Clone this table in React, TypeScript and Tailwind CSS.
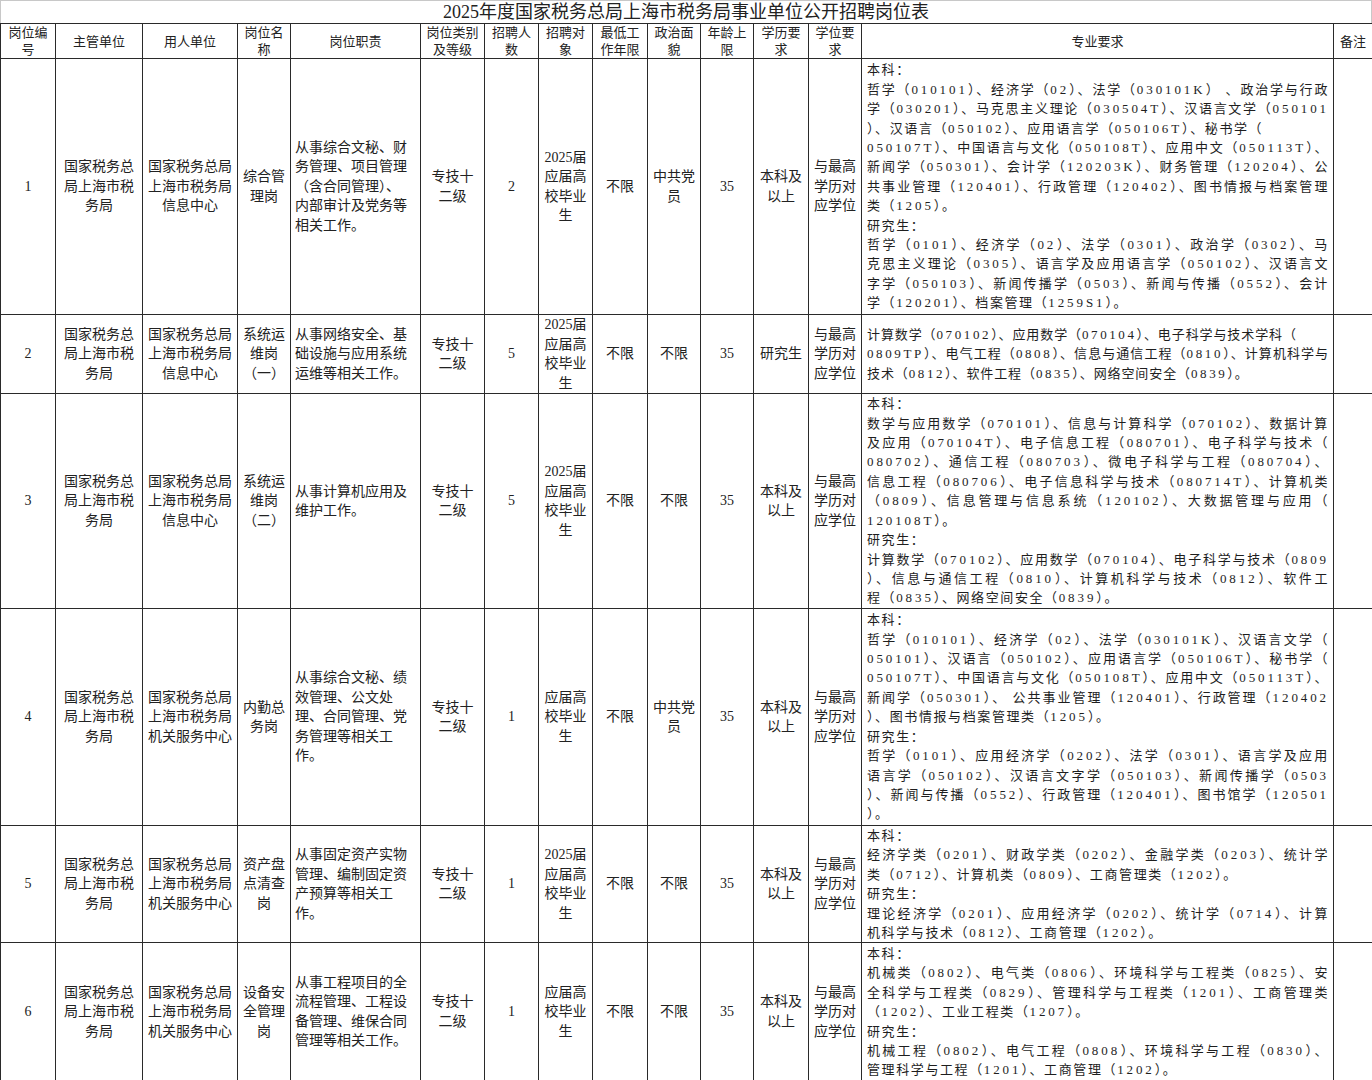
import React from "react";

type Row = {
  no: string;
  org: string[];
  unit: string[];
  post: string[];
  duty: string[];
  level: string[];
  count: string;
  target: string[];
  work: string;
  party: string[];
  age: string;
  edu: string[];
  degree: string[];
  major: string[][];
  loose: number[];
  tight?: boolean;
  h: string;
};

const ORG = ["国家税务总", "局上海市税", "务局"];
const INFO = ["国家税务总局", "上海市税务局", "信息中心"];
const SVC = ["国家税务总局", "上海市税务局", "机关服务中心"];
const LEVEL = ["专技十", "二级"];
const GRAD = ["2025届", "应届高", "校毕业", "生"];
const DEG = ["与最高", "学历对", "应学位"];

const rows: Row[] = [
  {
    no: "1",
    org: ORG,
    unit: INFO,
    post: ["综合管", "理岗"],
    duty: ["从事综合文秘、财", "务管理、项目管理", "（含合同管理）、", "内部审计及党务等", "相关工作。"],
    level: LEVEL,
    count: "2",
    target: GRAD,
    work: "不限",
    party: ["中共党", "员"],
    age: "35",
    edu: ["本科及", "以上"],
    degree: DEG,
    h: "h-[256px]",
    loose: [3],
    major: [
      ["本科："],
      [
        "哲学（010101）、经济学（02）、法学（030101K） 、政治学与行政",
        "学（030201）、马克思主义理论（030504T）、汉语言文学（050101",
        "）、汉语言（050102）、应用语言学（050106T）、秘书学（",
        "050107T）、中国语言与文化（050108T）、应用中文（050113T）、",
        "新闻学（050301）、会计学（120203K）、财务管理（120204）、公",
        "共事业管理（120401）、行政管理（120402）、图书情报与档案管理",
        "类（1205）。",
      ],
      ["研究生："],
      [
        "哲学（0101）、经济学（02）、法学（0301）、政治学（0302）、马",
        "克思主义理论（0305）、语言学及应用语言学（050102）、汉语言文",
        "字学（050103）、新闻传播学（0503）、新闻与传播（0552）、会计",
        "学（120201）、档案管理（1259S1）。",
      ],
    ],
  },
  {
    no: "2",
    org: ORG,
    unit: INFO,
    post: ["系统运", "维岗", "（一）"],
    duty: ["从事网络安全、基", "础设施与应用系统", "运维等相关工作。"],
    level: LEVEL,
    count: "5",
    target: GRAD,
    work: "不限",
    party: ["不限"],
    age: "35",
    edu: ["研究生"],
    degree: DEG,
    h: "h-[78px]",
    loose: [0],
    tight: true,
    major: [
      [
        "计算数学（070102）、应用数学（070104）、电子科学与技术学科（",
        "0809TP）、电气工程（0808）、信息与通信工程（0810）、计算机科学与",
        "技术（0812）、软件工程（0835）、网络空间安全（0839）。",
      ],
    ],
  },
  {
    no: "3",
    org: ORG,
    unit: INFO,
    post: ["系统运", "维岗", "（二）"],
    duty: ["从事计算机应用及", "维护工作。"],
    level: LEVEL,
    count: "5",
    target: GRAD,
    work: "不限",
    party: ["不限"],
    age: "35",
    edu: ["本科及", "以上"],
    degree: DEG,
    h: "h-[215px]",
    loose: [],
    major: [
      ["本科："],
      [
        "数学与应用数学（070101）、信息与计算科学（070102）、数据计算",
        "及应用（070104T）、电子信息工程（080701）、电子科学与技术（",
        "080702）、通信工程（080703）、微电子科学与工程（080704）、",
        "信息工程（080706）、电子信息科学与技术（080714T）、计算机类",
        "（0809）、信息管理与信息系统（120102）、大数据管理与应用（",
        "120108T）。",
      ],
      ["研究生："],
      [
        "计算数学（070102）、应用数学（070104）、电子科学与技术（0809",
        "）、信息与通信工程（0810）、计算机科学与技术（0812）、软件工",
        "程（0835）、网络空间安全（0839）。",
      ],
    ],
  },
  {
    no: "4",
    org: ORG,
    unit: SVC,
    post: ["内勤总", "务岗"],
    duty: ["从事综合文秘、绩", "效管理、公文处", "理、合同管理、党", "务管理等相关工", "作。"],
    level: LEVEL,
    count: "1",
    target: ["应届高", "校毕业", "生"],
    work: "不限",
    party: ["中共党", "员"],
    age: "35",
    edu: ["本科及", "以上"],
    degree: DEG,
    h: "h-[217px]",
    loose: [],
    major: [
      ["本科："],
      [
        "哲学（010101）、经济学（02）、法学（030101K）、汉语言文学（",
        "050101）、汉语言（050102）、应用语言学（050106T）、秘书学（",
        "050107T）、中国语言与文化（050108T）、应用中文（050113T）、",
        "新闻学（050301）、 公共事业管理（120401）、行政管理（120402",
        "）、图书情报与档案管理类（1205）。",
      ],
      ["研究生："],
      [
        "哲学（0101）、应用经济学（0202）、法学（0301）、语言学及应用",
        "语言学（050102）、汉语言文字学（050103）、新闻传播学（0503",
        "）、新闻与传播（0552）、行政管理（120401）、图书馆学（120501",
        "）。",
      ],
    ],
  },
  {
    no: "5",
    org: ORG,
    unit: SVC,
    post: ["资产盘", "点清查", "岗"],
    duty: ["从事固定资产实物", "管理、编制固定资", "产预算等相关工", "作。"],
    level: LEVEL,
    count: "1",
    target: GRAD,
    work: "不限",
    party: ["不限"],
    age: "35",
    edu: ["本科及", "以上"],
    degree: DEG,
    h: "h-[116px]",
    loose: [],
    major: [
      ["本科："],
      [
        "经济学类（0201）、财政学类（0202）、金融学类（0203）、统计学",
        "类（0712）、计算机类（0809）、工商管理类（1202）。",
      ],
      ["研究生："],
      [
        "理论经济学（0201）、应用经济学（0202）、统计学（0714）、计算",
        "机科学与技术（0812）、工商管理（1202）。",
      ],
    ],
  },
  {
    no: "6",
    org: ORG,
    unit: SVC,
    post: ["设备安", "全管理", "岗"],
    duty: ["从事工程项目的全", "流程管理、工程设", "备管理、维保合同", "管理等相关工作。"],
    level: LEVEL,
    count: "1",
    target: ["应届高", "校毕业", "生"],
    work: "不限",
    party: ["不限"],
    age: "35",
    edu: ["本科及", "以上"],
    degree: DEG,
    h: "h-[138px]",
    loose: [],
    major: [
      ["本科："],
      [
        "机械类（0802）、电气类（0806）、环境科学与工程类（0825）、安",
        "全科学与工程类（0829）、管理科学与工程类（1201）、工商管理类",
        "（1202）、工业工程类（1207）。",
      ],
      ["研究生："],
      [
        "机械工程（0802）、电气工程（0808）、环境科学与工程（0830）、",
        "管理科学与工程（1201）、工商管理（1202）。",
      ],
    ],
  },
];

const headers: string[][] = [
  ["岗位编", "号"],
  ["主管单位"],
  ["用人单位"],
  ["岗位名", "称"],
  ["岗位职责"],
  ["岗位类别", "及等级"],
  ["招聘人", "数"],
  ["招聘对", "象"],
  ["最低工", "作年限"],
  ["政治面", "貌"],
  ["年龄上", "限"],
  ["学历要", "求"],
  ["学位要", "求"],
  ["专业要求"],
  ["备注"],
];

function Lines({ items }: { items: string[] }) {
  return (
    <>
      {items.map((t, i) => (
        <div key={i} className="whitespace-nowrap">
          {t}
        </div>
      ))}
    </>
  );
}

// digits and latin letters get wider tracking, like the source sheet
function Rich({ text, tight }: { text: string; tight?: boolean }) {
  const parts = text.split(/([0-9A-Za-z]+)/);
  return (
    <>
      {parts.map((p, i) =>
        /^[0-9A-Za-z]+$/.test(p) ? (
          <span key={i} className={tight ? "tracking-[2.6px]" : "tracking-[2.9px]"}>
            {p}
          </span>
        ) : (
          <span key={i}>{p}</span>
        )
      )}
    </>
  );
}

function Major({ row }: { row: Row }) {
  let idx = 0;
  return (
    <>
      {row.major.map((para) =>
        para.map((t, j) => {
          const i = idx++;
          const last = j === para.length - 1;
          const fill = !last && !row.loose.includes(i);
          return (
            <div
              key={i}
              className={
                fill
                  ? "whitespace-nowrap text-justify [text-align-last:justify]"
                  : "whitespace-nowrap"
              }
            >
              <Rich text={t} tight={row.tight} />
            </div>
          );
        })
      )}
    </>
  );
}

const cell = "border border-[#2a2a2a] align-middle text-center px-[2px] py-0";

export default function App() {
  return (
    <div className="w-[1372px] bg-white text-[#222] font-['Liberation_Serif','Noto_Sans_CJK_SC',serif]">
      <div className="h-[23px] border-t border-x border-[#c8c8c8] flex items-center justify-center text-[18px] leading-[22px]">
        2025年度国家税务总局上海市税务局事业单位公开招聘岗位表
      </div>
      <table className="w-[1372px] table-fixed border-collapse">
        <colgroup>
          <col className="w-[55px]" />
          <col className="w-[87px]" />
          <col className="w-[95px]" />
          <col className="w-[53px]" />
          <col className="w-[130px]" />
          <col className="w-[64px]" />
          <col className="w-[54px]" />
          <col className="w-[54px]" />
          <col className="w-[55px]" />
          <col className="w-[53px]" />
          <col className="w-[53px]" />
          <col className="w-[55px]" />
          <col className="w-[53px]" />
          <col className="w-[472px]" />
          <col className="w-[39px]" />
        </colgroup>
        <thead>
          <tr className="h-[35px]">
            {headers.map((h, i) => (
              <th key={i} className={`${cell} font-normal text-[13px] leading-[17px]`}>
                <Lines items={h} />
              </th>
            ))}
          </tr>
        </thead>
        <tbody className="text-[14px] leading-[19.5px]">
          {rows.map((r) => (
            <tr key={r.no} className={r.h}>
              <td className={cell}>{r.no}</td>
              <td className={cell}>
                <Lines items={r.org} />
              </td>
              <td className={cell}>
                <Lines items={r.unit} />
              </td>
              <td className={cell}>
                <Lines items={r.post} />
              </td>
              <td className={`${cell} !text-left !pl-[4px]`}>
                <Lines items={r.duty} />
              </td>
              <td className={cell}>
                <Lines items={r.level} />
              </td>
              <td className={cell}>{r.count}</td>
              <td className={cell}>
                <Lines items={r.target} />
              </td>
              <td className={cell}>{r.work}</td>
              <td className={cell}>
                <Lines items={r.party} />
              </td>
              <td className={cell}>{r.age}</td>
              <td className={cell}>
                <Lines items={r.edu} />
              </td>
              <td className={cell}>
                <Lines items={r.degree} />
              </td>
              <td
                className={`${cell} !text-left !pl-[5px] !pr-[4px] text-[13px] !leading-[19.4px] text-[#1e1e1e] ${
                  r.tight ? "tracking-[0.9px]" : "tracking-[1.6px]"
                }`}
              >
                <Major row={r} />
              </td>
              <td className={cell}></td>
            </tr>
          ))}
        </tbody>
      </table>
    </div>
  );
}
